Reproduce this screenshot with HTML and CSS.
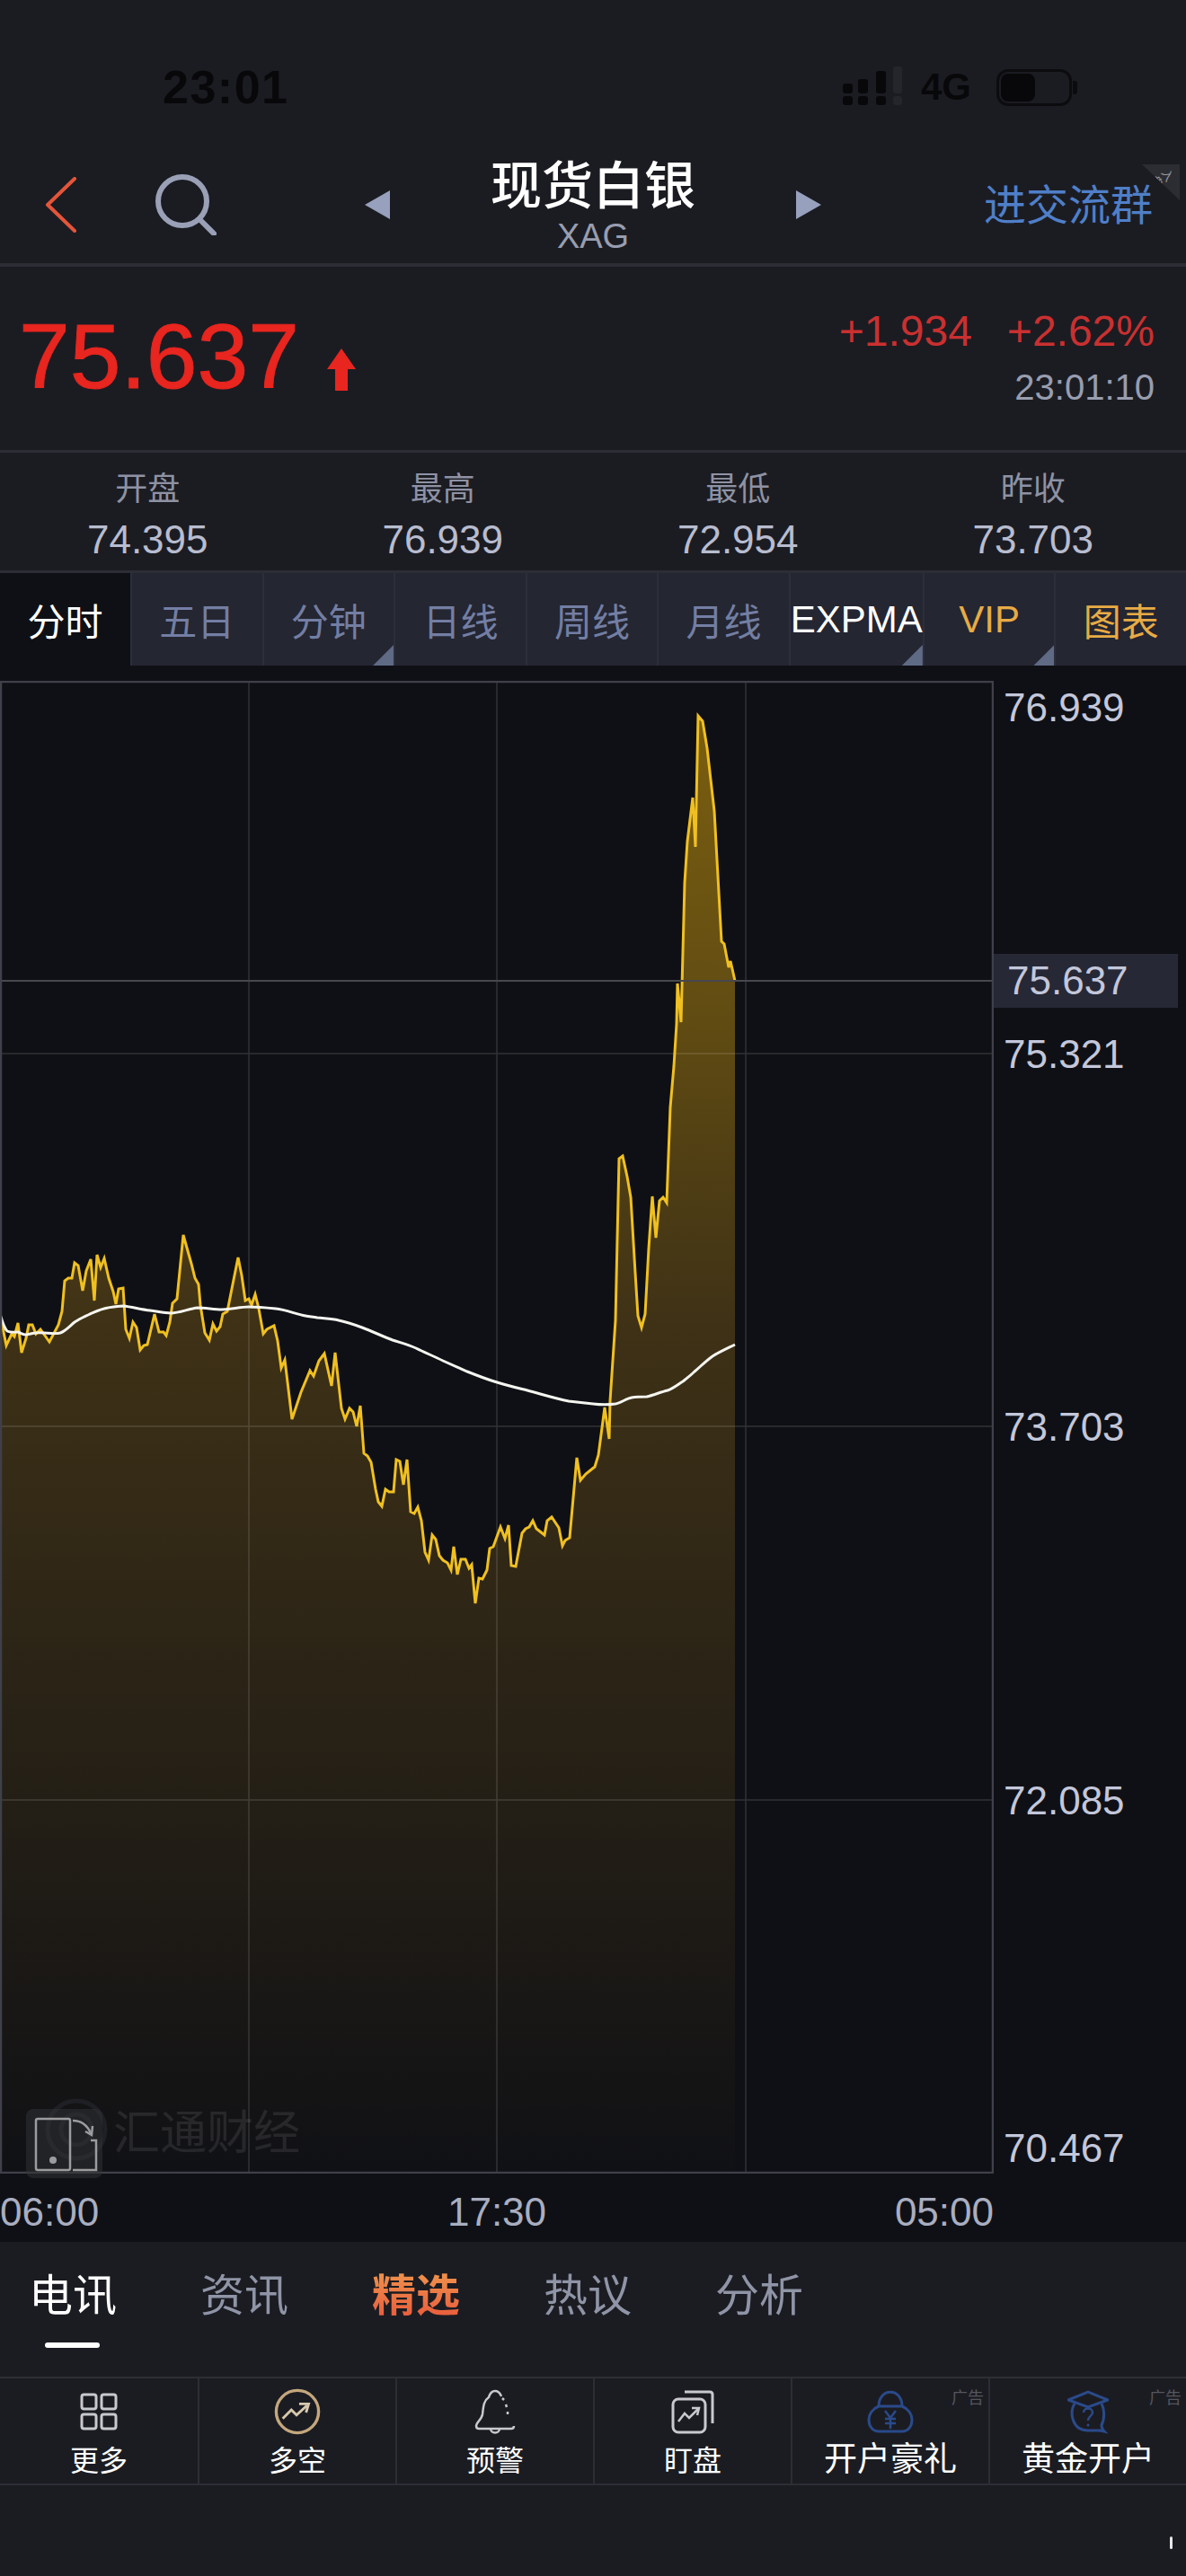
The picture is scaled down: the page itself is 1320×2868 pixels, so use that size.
FILE: index.html
```html
<!DOCTYPE html>
<html lang="zh-CN">
  <head>
    <meta charset="UTF-8" />
    <meta name="viewport" content="width=device-width, initial-scale=1.0" />
    <title>现货白银 XAG</title>
    <link rel="stylesheet" href="styles.css">
  </head>
  <body>

    <!-- Status bar -->
    <div class="status-bar">
      <span class="clock">23:01</span>
      <div class="status-right">
        <svg class="signal" width="66" height="44" viewBox="0 0 66 44">
          <rect x="0" y="19" width="11" height="11" rx="3" />
          <rect x="0" y="33" width="11" height="10" rx="3" />
          <rect x="17" y="14" width="11" height="16" rx="3" />
          <rect x="17" y="33" width="11" height="10" rx="3" />
          <rect x="37" y="5" width="11" height="25" rx="3" />
          <rect x="37" y="33" width="11" height="10" rx="3" />
          <rect class="signal-off" x="56" y="0" width="10" height="30" rx="3" />
          <rect class="signal-off" x="56" y="33" width="10" height="10" rx="3" />
        </svg>
        <span class="network">4G</span>
        <div class="battery"><div class="battery-level"></div></div>
      </div>
    </div>

    <!-- Nav -->
    <div class="nav">
      <div class="nav-left">
        <svg width="36" height="62" viewBox="0 0 36 62"><path d="M33 2 L3 31 L33 60" fill="none" stroke="#e4553a" stroke-width="4" stroke-linecap="round" stroke-linejoin="round" /></svg>
        <svg width="68" height="68" viewBox="0 0 68 68"><circle cx="30" cy="30" r="27" fill="none" stroke="#9aa0b6" stroke-width="6" /><path d="M49 50 L65 66" stroke="#9aa0b6" stroke-width="6" stroke-linecap="round" /></svg>
      </div>
      <div class="nav-center">
        <svg width="28" height="32" viewBox="0 0 28 32"><path d="M28 0 V32 L0 16 Z" fill="#97a0bc" /></svg>
        <div class="nav-title">
          <div class="name">现货白银</div>
          <div class="code">XAG</div>
        </div>
        <svg width="28" height="32" viewBox="0 0 28 32"><path d="M0 0 V32 L28 16 Z" fill="#97a0bc" /></svg>
      </div>
      <div class="nav-right">进交流群</div>
      <div class="corner-tag"><span>入盘</span></div>
    </div>

    <!-- Quote -->
    <div class="quote">
      <div class="price-wrap">
        <span class="price">75.637</span>
        <svg width="32" height="47" viewBox="0 0 32 47"><path d="M16 0 L32 23 H23 V47 H9 V23 H0 Z" fill="#e8251f" /></svg>
      </div>
      <div class="change-wrap">
        <div class="change"><span>+1.934</span><span>+2.62%</span></div>
        <div class="quote-time">23:01:10</div>
      </div>
    </div>

    <div class="stats">
      <div class="stat"><div class="stat-label">开盘</div><div class="stat-value">74.395</div></div>
      <div class="stat"><div class="stat-label">最高</div><div class="stat-value">76.939</div></div>
      <div class="stat"><div class="stat-label">最低</div><div class="stat-value">72.954</div></div>
      <div class="stat"><div class="stat-label">昨收</div><div class="stat-value">73.703</div></div>
    </div>

    <!-- Period tabs -->
    <div class="periods">
      <div class="period active">分时</div>
      <div class="period">五日</div>
      <div class="period more">分钟</div>
      <div class="period">日线</div>
      <div class="period">周线</div>
      <div class="period">月线</div>
      <div class="period more white">EXPMA</div>
      <div class="period more gold">VIP</div>
      <div class="period gold">图表</div>
    </div>

    <!-- Chart -->
    <div class="chart-area">
      <div class="chart-row">
        <div class="chart-frame">
          <svg class="chart-svg" width="1106" height="1662" viewBox="0 758 1106 1662">
            <defs>
              <linearGradient id="area" gradientUnits="userSpaceOnUse" x1="0" y1="797" x2="0" y2="2418">
                <stop offset="0" stop-color="rgb(122,94,16)" />
                <stop offset="0.187" stop-color="rgb(100,78,18)" />
                <stop offset="0.421" stop-color="rgb(62,49,22)" />
                <stop offset="0.588" stop-color="rgb(48,39,22)" />
                <stop offset="1" stop-color="rgb(16,17,21)" />
              </linearGradient>
            </defs>
            <path fill="url(#area)" d="M0,2418 L0,1473 L7,1498 13,1485 16,1488 20,1473 24,1506 29,1490 32,1475 36,1475 40,1485 45,1480 50,1487 55,1494 65,1475 69,1460 72,1426 76,1423 80,1423 83,1406 87,1409 92,1437 96,1415 101,1402 105,1448 108,1397 112,1411 116,1401 121,1423 126,1438 129,1452 132,1435 137,1434 140,1480 144,1490 148,1472 152,1478 156,1503 160,1498 164,1497 172,1463 177,1483 182,1483 185,1487 189,1472 192,1451 197,1446 204,1375 213,1407 217,1423 221,1430 223,1453 228,1484 233,1492 237,1474 241,1482 245,1477 248,1463 253,1460 265,1400 269,1420 273,1448 277,1446 280,1453 284,1441 288,1457 293,1485 297,1480 305,1476 309,1493 313,1523 317,1514 325,1580 335,1550 345,1526 349,1532 355,1515 361,1507 369,1543 373,1506 380,1568 384,1580 389,1568 393,1572 397,1588 401,1565 405,1618 409,1621 413,1628 418,1658 421,1672 425,1677 429,1658 433,1661 438,1661 441,1625 445,1627 449,1653 453,1625 457,1683 461,1685 465,1678 469,1693 473,1728 477,1737 481,1709 485,1714 489,1732 493,1737 498,1740 502,1748 505,1722 509,1753 513,1736 518,1736 522,1746 525,1742 529,1785 533,1757 537,1758 542,1748 545,1724 549,1722 557,1700 562,1713 566,1698 569,1743 574,1744 581,1707 585,1702 589,1700 593,1693 597,1702 606,1709 609,1693 614,1689 622,1701 626,1721 629,1715 634,1712 642,1623 646,1648 652,1641 662,1633 666,1620 673,1567 678,1602 679,1560 683,1500 685,1470 689,1290 693,1287 698,1310 702,1333 707,1417 710,1465 714,1478 718,1463 722,1390 726,1332 730,1378 734,1337 738,1333 742,1339 746,1233 750,1187 753,1140 754,1095 758,1138 762,983 765,937 771,888 774,943 777,797 782,803 787,833 795,903 803,1048 806,1051 811,1077 813,1070 818,1092 L818,2418 Z" />
            <g class="grid-lines">
              <path d="M0,1173 H1106 M0,1588 H1106 M0,2004 H1106 M277,758 V2418 M553,758 V2418 M830,758 V2418" />
            </g>
            <polyline class="price-line" points="2,1473 7,1498 13,1485 16,1488 20,1473 24,1506 29,1490 32,1475 36,1475 40,1485 45,1480 50,1487 55,1494 65,1475 69,1460 72,1426 76,1423 80,1423 83,1406 87,1409 92,1437 96,1415 101,1402 105,1448 108,1397 112,1411 116,1401 121,1423 126,1438 129,1452 132,1435 137,1434 140,1480 144,1490 148,1472 152,1478 156,1503 160,1498 164,1497 172,1463 177,1483 182,1483 185,1487 189,1472 192,1451 197,1446 204,1375 213,1407 217,1423 221,1430 223,1453 228,1484 233,1492 237,1474 241,1482 245,1477 248,1463 253,1460 265,1400 269,1420 273,1448 277,1446 280,1453 284,1441 288,1457 293,1485 297,1480 305,1476 309,1493 313,1523 317,1514 325,1580 335,1550 345,1526 349,1532 355,1515 361,1507 369,1543 373,1506 380,1568 384,1580 389,1568 393,1572 397,1588 401,1565 405,1618 409,1621 413,1628 418,1658 421,1672 425,1677 429,1658 433,1661 438,1661 441,1625 445,1627 449,1653 453,1625 457,1683 461,1685 465,1678 469,1693 473,1728 477,1737 481,1709 485,1714 489,1732 493,1737 498,1740 502,1748 505,1722 509,1753 513,1736 518,1736 522,1746 525,1742 529,1785 533,1757 537,1758 542,1748 545,1724 549,1722 557,1700 562,1713 566,1698 569,1743 574,1744 581,1707 585,1702 589,1700 593,1693 597,1702 606,1709 609,1693 614,1689 622,1701 626,1721 629,1715 634,1712 642,1623 646,1648 652,1641 662,1633 666,1620 673,1567 678,1602 679,1560 683,1500 685,1470 689,1290 693,1287 698,1310 702,1333 707,1417 710,1465 714,1478 718,1463 722,1390 726,1332 730,1378 734,1337 738,1333 742,1339 746,1233 750,1187 753,1140 754,1095 758,1138 762,983 765,937 771,888 774,943 777,797 782,803 787,833 795,903 803,1048 806,1051 811,1077 813,1070 818,1092" />
            <path class="avg-line" d="M0,1463 C3,1472 4,1478 8,1482 C12,1484 16,1483 20,1483 C23,1484 25,1486 28,1486 C32,1486 36,1484 40,1484 C50,1483 60,1486 67,1484 C73,1482 78,1476 83,1472 C89,1468 94,1466 100,1463 C107,1460 113,1457 120,1456 C126,1455 131,1454 137,1454 C147,1455 157,1458 167,1459 C175,1460 183,1462 190,1462 C200,1462 210,1457 220,1456 C229,1456 238,1458 247,1458 C257,1458 267,1455 277,1455 C287,1455 297,1456 307,1457 C318,1458 329,1463 340,1465 C345,1466 349,1466 353,1467 C361,1468 369,1468 377,1470 C386,1472 395,1475 403,1478 C414,1482 426,1488 437,1492 C446,1495 454,1497 463,1501 C473,1506 483,1510 493,1515 C502,1519 511,1523 520,1527 C530,1531 540,1535 550,1538 C562,1542 575,1545 587,1548 C602,1552 618,1557 633,1560 C642,1561 651,1562 660,1563 C668,1564 678,1564 685,1563 C691,1562 697,1557 703,1556 C709,1555 714,1555 720,1555 C728,1553 735,1550 743,1548 C749,1546 755,1541 760,1538 C765,1534 769,1531 773,1527 C780,1521 786,1515 793,1510 C801,1505 810,1501 818,1497" />
            <path class="last-line" d="M0,1092 H1106" />
            <rect class="frame-line" x="1" y="1" width="1104" height="1660" transform="translate(0 758)" />
          </svg>
          <div class="watermark">
            <svg class="watermark-logo" width="70" height="70" viewBox="0 0 70 70"><circle cx="35" cy="35" r="32" fill="none" stroke="#1f2025" stroke-width="5" /><circle cx="35" cy="35" r="17" fill="none" stroke="#1f2025" stroke-width="5" /></svg>
            <span>汇通财经</span>
          </div>
          <div class="rotate-btn">
            <svg width="85" height="77" viewBox="0 0 85 77" fill="none" stroke="#9c9c9f" stroke-width="2.5">
              <rect x="11" y="11" width="38" height="57" rx="2" />
              <circle cx="30" cy="57" r="4" fill="#9c9c9f" stroke="none" />
              <path d="M52 13 C62 13 68 18 72 27" />
              <path d="M66 25 L73 29 L74 19" />
              <path d="M72 35 H78 V68 H52" />
            </svg>
          </div>
        </div>
        <div class="axis">
          <div class="axis-label">76.939</div>
          <div class="axis-label">75.321</div>
          <div class="axis-label">73.703</div>
          <div class="axis-label">72.085</div>
          <div class="axis-label">70.467</div>
          <div class="last-price">75.637</div>
        </div>
      </div>
      <div class="time-axis">
        <span>06:00</span>
        <span>17:30</span>
        <span>05:00</span>
      </div>
    </div>

    <!-- News tabs -->
    <div class="news-tabs">
      <div class="news-tab active">电讯</div>
      <div class="news-tab">资讯</div>
      <div class="news-tab hot">精选</div>
      <div class="news-tab">热议</div>
      <div class="news-tab">分析</div>
    </div>

    <!-- Toolbar -->
    <div class="toolbar">
      <div class="tool">
        <svg width="44" height="44" viewBox="0 0 44 44" fill="none" stroke="#c9c9cd" stroke-width="3">
          <rect x="3" y="3" width="16" height="16" rx="2.5" />
          <rect x="25" y="3" width="16" height="16" rx="2.5" />
          <rect x="3" y="25" width="16" height="16" rx="2.5" />
          <rect x="25" y="25" width="16" height="16" rx="2.5" />
        </svg>
        <div class="tool-label">更多</div>
      </div>
      <div class="tool">
        <svg width="54" height="54" viewBox="0 0 54 54" fill="none">
          <circle cx="27" cy="27" r="24.5" stroke="#c4a77d" stroke-width="3.5" />
          <path d="M10 35 L20 25 L26 31 L38 20" stroke="#d8c9ae" stroke-width="3" />
          <path d="M29 18 H40 L37 28" stroke="#d8c9ae" stroke-width="3" />
        </svg>
        <div class="tool-label">多空</div>
      </div>
      <div class="tool">
        <svg width="46" height="50" viewBox="0 0 46 50" fill="none" stroke="#c9c9cd" stroke-width="2.5">
          <path d="M23 2 C28 2 29 6 30 8" />
          <path d="M23 2 C18 2 17 6 16 9 C10 13 10 20 9 28 C8 34 2 37 2 41 C2 43 3 44 5 44 H41 C43 44 44 43 44 41" />
          <path d="M31 10 L33 12 M35 17 L36 20 M37 25 L37 28" />
          <path d="M18 44 C18 50 28 50 28 44" />
        </svg>
        <div class="tool-label">预警</div>
      </div>
      <div class="tool">
        <svg width="48" height="48" viewBox="0 0 48 48" fill="none" stroke="#c9c9cd" stroke-width="3">
          <rect x="2" y="10" width="36" height="37" rx="6" />
          <path d="M15 2 H43 C45 2 46 3 46 5 V37" />
          <path d="M8 35 L15 26 L20 31 L30 21" stroke-width="2.5" />
          <path d="M23 20 H31 L29 28" stroke-width="2.5" />
        </svg>
        <div class="tool-label">盯盘</div>
      </div>
      <div class="tool">
        <svg width="52" height="48" viewBox="0 0 52 48" fill="none" stroke="#2a4a8a" stroke-width="3">
          <path d="M13 18 C13 -3 39 -3 39 18" />
          <path d="M13 18 H39 C46 21 50 27 50 33 C50 40 46 46 39 46 H13 C6 46 2 40 2 33 C2 27 6 21 13 18 Z" />
          <path d="M20 23 L26 31 L32 23 M26 31 V43 M20 32 H32 M20 37 H32" stroke-width="2.5" />
        </svg>
        <div class="tool-label big">开户豪礼</div>
        <span class="ad-tag">广告</span>
      </div>
      <div class="tool">
        <svg width="46" height="46" viewBox="0 0 46 46" fill="none" stroke="#2a4a8a" stroke-width="3">
          <path d="M1 10 L23 1 L45 10 L23 18 Z" />
          <path d="M8 14 C2 24 5 44 23 44 H36 L41 45 C39 43 38 41 38 38 C42 30 41 20 38 14" />
          <path d="M18 24 C18 18 28 18 28 24 C28 28 23 28 23 33" stroke-width="2.5" />
          <circle cx="23" cy="38" r="1.5" fill="#2a4a8a" stroke="none" />
        </svg>
        <div class="tool-label big">黄金开户</div>
        <span class="ad-tag">广告</span>
      </div>
    </div>

    <div class="home-dot"></div>

  </body>
</html>
```

FILE: styles.css
```css
:root {
  --bg: #1b1c22;
  --chart-bg: #0f1015;
  --line: #2d2e35;
  --red: #e8251f;
  --muted: #989daf;
  --gold: #e8ab45;
}

* {
  box-sizing: border-box;
}

body {
  margin: 0;
  width: 1320px;
  height: 2868px;
  overflow: hidden;
  position: relative;
  background: var(--bg);
  font-family: "Liberation Sans", "Noto Sans CJK SC", sans-serif;
  color: #fff;
}

/* status bar */
.status-bar {
  height: 160px;
  padding: 72px 127px 0 181px;
  display: flex;
  justify-content: space-between;
  align-items: flex-start;
  color: #08080a;
}

.clock {
  font-size: 52px;
  font-weight: 700;
  line-height: 50px;
  letter-spacing: 1.5px;
}

.status-right {
  display: flex;
  align-items: center;
  margin-top: 3px;
}

.signal {
  fill: #08080a;
  margin-top: -2px;
  margin-right: 4px;
}

.signal .signal-off {
  fill: #25262c;
}

.network {
  font-size: 42px;
  font-weight: 700;
  line-height: 44px;
  margin-left: 17px;
  width: 84px;
}

.battery {
  width: 84px;
  height: 41px;
  border: 3px solid #0c0c0f;
  border-radius: 13px;
  padding: 2px;
  position: relative;
}

.battery::after {
  content: "";
  position: absolute;
  right: -9px;
  top: 10px;
  width: 5px;
  height: 15px;
  background: #0c0c0f;
  border-radius: 0 3px 3px 0;
}

.battery-level {
  width: 38px;
  height: 31px;
  background: #08080a;
  border-radius: 8px;
}

/* nav */
.nav {
  height: 137px;
  border-bottom: 4px solid var(--line);
  display: grid;
  grid-template-columns: 1fr auto 1fr;
  position: relative;
}

.nav-left {
  display: flex;
  align-items: center;
  gap: 87px;
  padding: 5px 0 0 50px;
  height: 130px;
}

.nav-center {
  display: flex;
  align-items: flex-start;
  gap: 111px;
}

.nav-center > svg {
  margin-top: 52px;
}

.nav-title {
  text-align: center;
  width: 230px;
}

.name {
  font-family: "Noto Sans CJK SC", sans-serif;
  font-size: 57px;
  font-weight: 500;
  line-height: 70px;
  margin-top: 7px;
}

.code {
  font-size: 38px;
  line-height: 40px;
  color: var(--muted);
  margin-top: 6px;
}

.nav-right {
  font-family: "Noto Sans CJK SC", sans-serif;
  font-size: 47px;
  line-height: 60px;
  color: #4f7fc8;
  text-align: right;
  padding: 35px 37px 0 0;
  white-space: nowrap;
}

.corner-tag {
  position: absolute;
  right: 7px;
  top: 23px;
  width: 42px;
  height: 40px;
  background: #2c2d33;
  clip-path: polygon(0 0, 100% 0, 100% 100%);
}

.corner-tag span {
  position: absolute;
  left: 16px;
  top: 2px;
  font-family: "Noto Sans CJK SC", sans-serif;
  font-size: 13px;
  line-height: 14px;
  color: #9a9a9f;
  transform: rotate(60deg);
  width: 14px;
}

/* quote */
.quote {
  height: 207px;
  border-bottom: 3px solid var(--line);
  display: flex;
  justify-content: space-between;
  padding: 0 35px 0 21px;
}

.price-wrap {
  display: flex;
  align-items: flex-start;
  gap: 31px;
  padding-top: 50px;
}

.price {
  font-size: 102px;
  line-height: 100px;
  color: var(--red);
  -webkit-text-stroke: 1px var(--red);
}

.price-wrap svg {
  margin-top: 41px;
}

.change-wrap {
  padding-top: 47px;
  text-align: right;
}

.change {
  display: flex;
  gap: 39px;
  font-size: 48px;
  line-height: 50px;
  color: #c93030;
}

.quote-time {
  font-size: 40px;
  line-height: 44px;
  color: var(--muted);
  margin-top: 15px;
}

/* stats */
.stats {
  height: 134px;
  border-bottom: 3px solid var(--line);
  display: grid;
  grid-template-columns: repeat(4, 1fr);
  padding-right: 6px;
  text-align: center;
}

.stat-label {
  font-family: "Noto Sans CJK SC", sans-serif;
  font-size: 36px;
  line-height: 44px;
  color: #8e92a3;
  margin-top: 15px;
}

.stat-value {
  font-size: 44px;
  line-height: 48px;
  color: #b8bccf;
  margin-top: 14px;
}

/* period tabs */
.periods {
  height: 103px;
  display: grid;
  grid-template-columns: 145px repeat(8, 1fr);
}

.period {
  background: rgb(36, 38, 50);
  border-left: 2px solid #2c2e3b;
  color: #737ea3;
  font-family: "Liberation Sans", "Noto Sans CJK SC", sans-serif;
  font-size: 42px;
  display: flex;
  align-items: center;
  justify-content: center;
  position: relative;
  white-space: nowrap;
}

.period.active {
  background: var(--chart-bg);
  border-left: 0;
  color: #fff;
}

.period.white {
  color: #fff;
}

.period.gold {
  color: var(--gold);
}

.period.more::after {
  content: "";
  position: absolute;
  right: 0;
  bottom: 0;
  width: 23px;
  height: 23px;
  background: #5f6a85;
  clip-path: polygon(100% 0, 100% 100%, 0 100%);
}

/* chart */
.chart-area {
  height: 1755px;
  background: var(--chart-bg);
  padding-top: 17px;
}

.chart-row {
  display: flex;
}

.chart-frame {
  width: 1106px;
  height: 1662px;
  position: relative;
}

.chart-svg {
  display: block;
}

.grid-lines path {
  fill: none;
  stroke: #fff;
  stroke-opacity: 0.14;
  stroke-width: 1.5;
}

.price-line {
  fill: none;
  stroke: #f0c020;
  stroke-width: 3;
}

.avg-line {
  fill: none;
  stroke: #f5f5f0;
  stroke-width: 3;
}

.last-line {
  fill: none;
  stroke: #47474f;
  stroke-width: 2;
}

.frame-line {
  fill: none;
  stroke: #3f4049;
  stroke-width: 2.5;
}

.watermark {
  position: absolute;
  left: 50px;
  top: 1575px;
  display: flex;
  align-items: center;
  gap: 6px;
  font-family: "Noto Sans CJK SC", sans-serif;
  font-size: 52px;
  color: rgba(255, 255, 255, 0.09);
}

.rotate-btn {
  position: absolute;
  left: 29px;
  top: 1590px;
  width: 85px;
  height: 77px;
  background: rgba(50, 51, 56, 0.5);
  border-radius: 8px;
}

.rotate-btn svg {
  display: block;
}

.axis {
  flex: 1;
  position: relative;
  padding-left: 11px;
}

.axis-label {
  font-size: 44px;
  line-height: 50px;
  color: #c3c7da;
}

.axis-label:nth-child(1) { margin-top: 5px; }
.axis-label:nth-child(2) { margin-top: 336px; }
.axis-label:nth-child(3) { margin-top: 365px; }
.axis-label:nth-child(4) { margin-top: 366px; }
.axis-label:nth-child(5) { margin-top: 337px; }

.last-price {
  position: absolute;
  left: 0;
  top: 304px;
  width: 205px;
  height: 60px;
  padding-left: 15px;
  background: rgb(38, 40, 54);
  font-size: 44px;
  line-height: 60px;
  color: #c3c7da;
}

.time-axis {
  width: 1106px;
  display: flex;
  justify-content: space-between;
  font-size: 44px;
  line-height: 50px;
  color: #a9aec0;
  margin-top: 18px;
}

/* news tabs */
.news-tabs {
  height: 150px;
  display: flex;
  gap: 93px;
  padding: 21px 0 0 32px;
  font-family: "Noto Sans CJK SC", sans-serif;
  font-size: 49px;
  line-height: 70px;
  color: #8f94a6;
}

.news-tab {
  position: relative;
  width: 98px;
  height: 70px;
  white-space: nowrap;
}

.news-tab.active {
  color: #fff;
}

.news-tab.active::after {
  content: "";
  position: absolute;
  left: 18px;
  top: 91px;
  width: 61px;
  height: 6px;
  border-radius: 3px;
  background: #fff;
}

.news-tab.hot {
  font-weight: 700;
  background: linear-gradient(180deg, #f0a050, #e8553a);
  -webkit-background-clip: text;
  background-clip: text;
  color: transparent;
}

/* toolbar */
.toolbar {
  height: 121px;
  border-top: 2px solid var(--line);
  border-bottom: 2px solid var(--line);
  display: grid;
  grid-template-columns: repeat(6, 1fr);
}

.tool {
  border-left: 2px solid var(--line);
  display: flex;
  flex-direction: column;
  align-items: center;
  position: relative;
  padding-top: 11px;
  height: 117px;
}

.tool:first-child {
  border-left: 0;
}

.tool svg {
  height: 52px;
  display: block;
}

.tool-label {
  font-family: "Noto Sans CJK SC", sans-serif;
  font-size: 32px;
  line-height: 40px;
  color: #fff;
  margin-top: 6px;
}

.tool-label.big {
  font-size: 37px;
  line-height: 42px;
  margin-top: 3px;
}

.ad-tag {
  position: absolute;
  right: 5px;
  top: 8px;
  font-family: "Noto Sans CJK SC", sans-serif;
  font-size: 18px;
  line-height: 24px;
  color: #55565e;
}

.home-dot {
  position: absolute;
  left: 1302px;
  top: 2824px;
  width: 3px;
  height: 14px;
  background: #e6e6e8;
  border-radius: 2px;
}
```
